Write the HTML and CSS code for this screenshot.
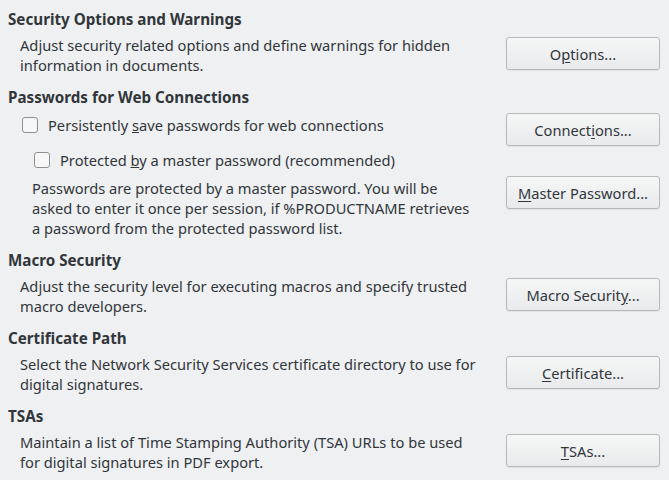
FILE: index.html
```html
<!DOCTYPE html>
<html>
<head>
<meta charset="utf-8">
<link rel="stylesheet" href="styles.css">
</head>
<body>
<div class="page">
  <section class="sec">
    <h2 class="head">Security Options and Warnings</h2>
    <div class="row">
      <p class="desc">Adjust security related options and define warnings for hidden<br>information in documents.</p>
      <button class="btn">O<u>p</u>tions...</button>
    </div>
  </section>

  <section class="sec">
    <h2 class="head">Passwords for Web Connections</h2>
    <div class="pw">
      <div class="pw-left">
        <label class="check c1"><span class="box"></span><span>Persistently <u>s</u>ave passwords for web connections</span></label>
        <label class="check c2"><span class="box"></span><span>Protected <u>b</u>y a master password (recommended)</span></label>
        <p class="desc pw-desc">Passwords are protected by a master password. You will be<br>asked to enter it once per session, if %PRODUCTNAME retrieves<br>a password from the protected password list.</p>
      </div>
      <div class="pw-right">
        <button class="btn">Connect<u>i</u>ons...</button>
        <button class="btn btn-mp"><u>M</u>aster Password...</button>
      </div>
    </div>
  </section>

  <section class="sec">
    <h2 class="head">Macro Security</h2>
    <div class="row">
      <p class="desc">Adjust the security level for executing macros and specify trusted<br>macro developers.</p>
      <button class="btn">Macro Securit<u>y</u>...</button>
    </div>
  </section>

  <section class="sec">
    <h2 class="head">Certificate Path</h2>
    <div class="row">
      <p class="desc">Select the Network Security Services certificate directory to use for<br>digital signatures.</p>
      <button class="btn"><u>C</u>ertificate...</button>
    </div>
  </section>

  <section class="sec">
    <h2 class="head">TSAs</h2>
    <div class="row">
      <p class="desc">Maintain a list of Time Stamping Authority (TSA) URLs to be used<br>for digital signatures in PDF export.</p>
      <button class="btn"><u>T</u>SAs...</button>
    </div>
  </section>
</div>
</body>
</html>
```

FILE: styles.css
```css
html, body {
  margin: 0;
  padding: 0;
  background: #eff0f1;
}
body {
  font-family: "Noto Sans", "Open Sans", sans-serif;
  font-size: 14.67px;
  color: #31363b;
  width: 669px;
  height: 480px;
  overflow: hidden;
}
.page {
  padding: 9px 9px 0 8px;
}
.sec + .sec {
  margin-top: 12px;
}
.head {
  margin: 0;
  font-size: 15.2px;
  font-weight: bold;
  line-height: 20px;
  height: 20px;
}
.row {
  display: flex;
  justify-content: space-between;
  align-items: flex-start;
  margin-top: 6px;
}
.desc {
  margin: 0 0 0 12px;
  line-height: 20px;
  white-space: nowrap;
}
.btn {
  font-family: inherit;
  font-size: 14.67px;
  color: #31363b;
  width: 154px;
  height: 33px;
  margin-top: 2px;
  padding: 0;
  border: 1px solid #b6b8ba;
  border-radius: 3px;
  background: linear-gradient(#f5f6f6, #e9eaeb);
  box-shadow: 0 1px 1px rgba(0,0,0,0.06);
}
.btn u {
  text-underline-offset: 2px;
}
.pw {
  display: flex;
  justify-content: space-between;
  align-items: flex-start;
}
.pw-left {
  display: flex;
  flex-direction: column;
}
.check {
  display: flex;
  align-items: center;
  line-height: 20px;
  height: 20px;
  white-space: nowrap;
}
.check .box {
  width: 14px;
  height: 14px;
  border: 1px solid #8e9194;
  border-radius: 3px;
  background: #f7f7f8;
  margin-right: 10px;
  flex: none;
}
.c1 {
  margin-top: 8px;
  padding-left: 14px;
}
.c2 {
  margin-top: 15px;
  padding-left: 26px;
}
.pw-desc {
  margin-top: 8px;
  margin-left: 24px;
}
.pw-right {
  display: flex;
  flex-direction: column;
}
.pw-right .btn {
  margin-top: 6px;
}
.pw-right .btn-mp {
  margin-top: 30px;
}
```
